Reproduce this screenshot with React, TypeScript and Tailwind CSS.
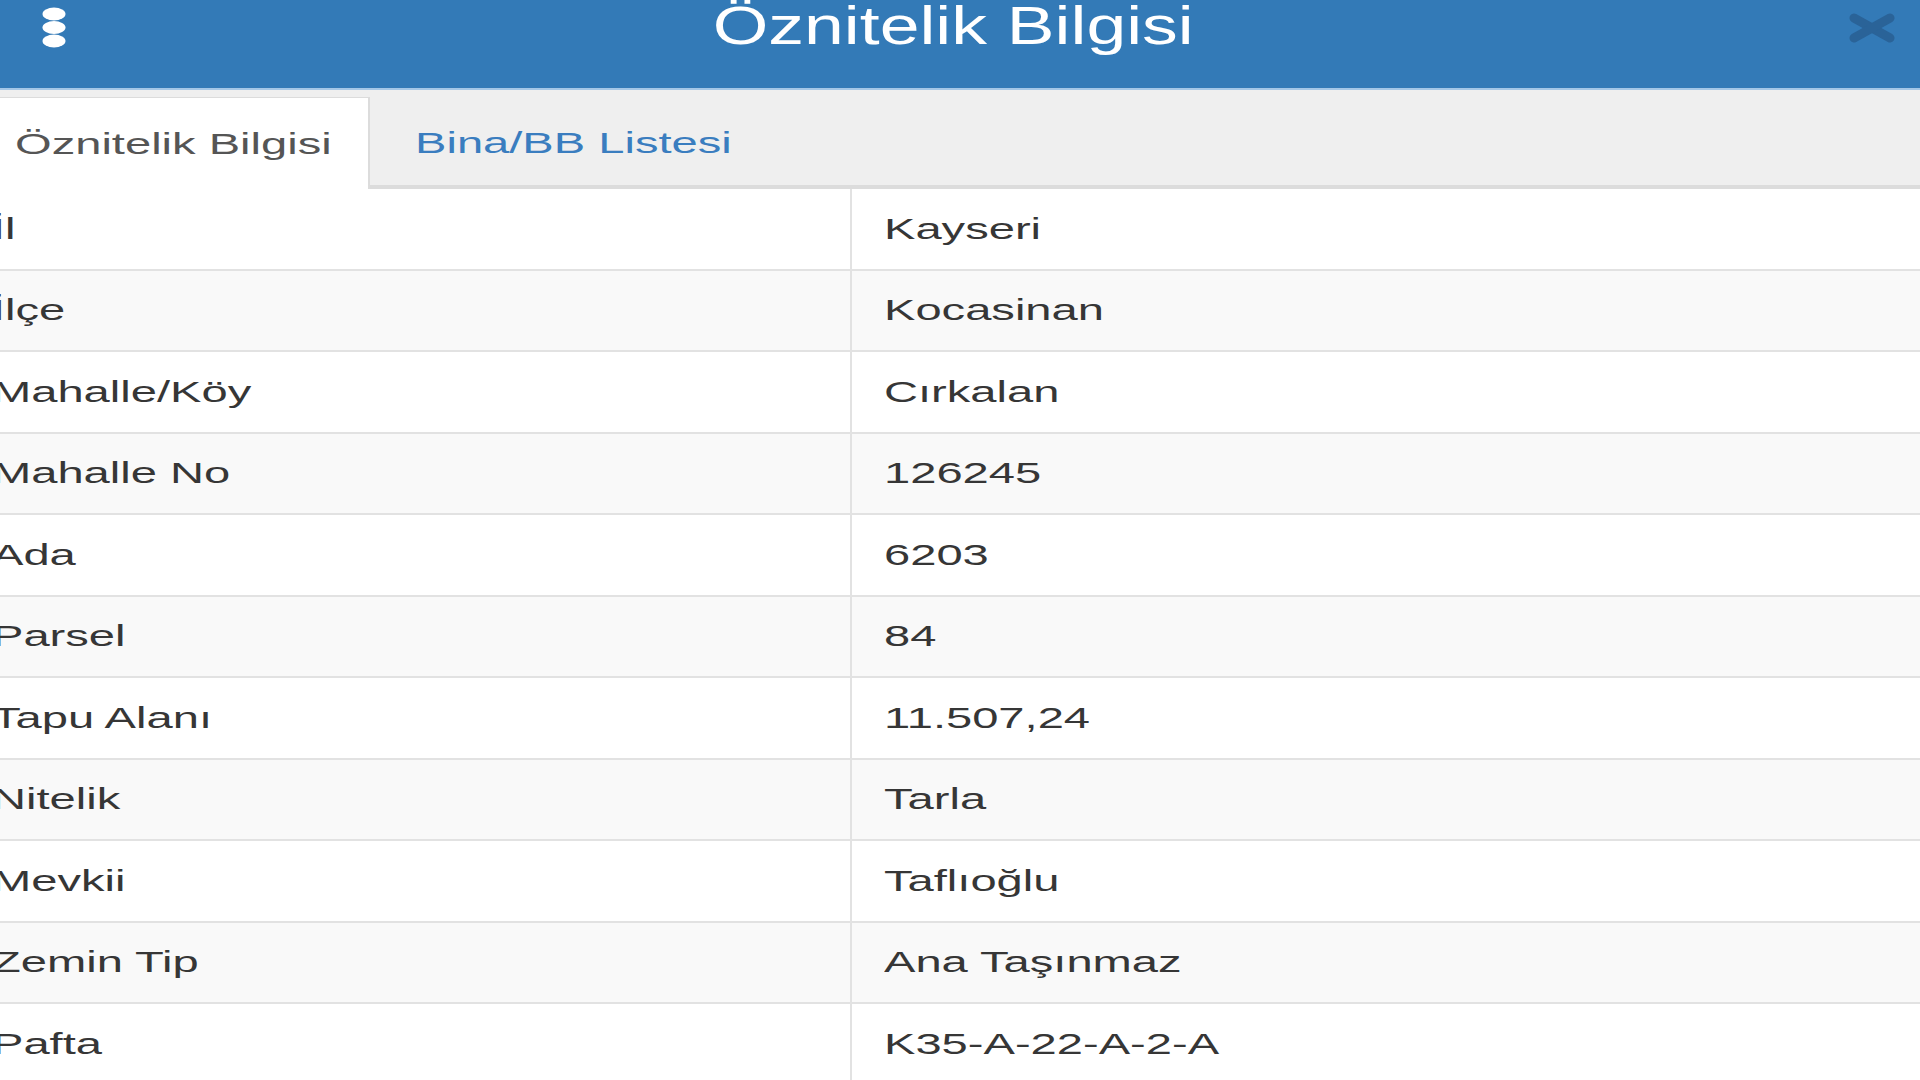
import React from "react";

const rows: [string, string][] = [
  ["İl", "Kayseri"],
  ["İlçe", "Kocasinan"],
  ["Mahalle/Köy", "Cırkalan"],
  ["Mahalle No", "126245"],
  ["Ada", "6203"],
  ["Parsel", "84"],
  ["Tapu Alanı", "11.507,24"],
  ["Nitelik", "Tarla"],
  ["Mevkii", "Taflıoğlu"],
  ["Zemin Tip", "Ana Taşınmaz"],
  ["Pafta", "K35-A-22-A-2-A"],
];

function Wide({ children, className = "" }: { children: React.ReactNode; className?: string }) {
  return (
    <span className={"inline-block origin-left scale-x-[1.57] whitespace-nowrap " + className}>
      {children}
    </span>
  );
}

function KebabIcon() {
  return (
    <svg width="24" height="42" viewBox="0 0 24 42" className="block">
      <ellipse cx="12" cy="7" rx="11.5" ry="6.5" fill="#fff" />
      <ellipse cx="12" cy="20.5" rx="11.5" ry="6.5" fill="#fff" />
      <ellipse cx="12" cy="34" rx="11.5" ry="6.5" fill="#fff" />
    </svg>
  );
}

function CloseIcon() {
  return (
    <svg width="50" height="30" viewBox="0 0 50 30" className="block">
      <g stroke="#2a6398" strokeWidth="9" strokeLinecap="round">
        <line x1="7" y1="5" x2="43" y2="25" />
        <line x1="43" y1="5" x2="7" y2="25" />
      </g>
    </svg>
  );
}

export default function App() {
  return (
    <div
      className="w-[1920px] h-[1080px] overflow-hidden bg-white text-[#363636]"
      style={{ fontFamily: '"Liberation Sans", Arial, sans-serif' }}
    >
      {/* modal header */}
      <div className="h-[88px] bg-[#337ab7] flex items-start">
        <div className="ml-[42px] mt-[7px]">
          <KebabIcon />
        </div>
        <div className="flex-1 flex justify-center pr-[7px] -mt-[1px]">
          <span className="inline-block origin-center scale-x-[1.35] text-[53px] leading-none text-white whitespace-nowrap">
            Öznitelik Bilgisi
          </span>
        </div>
        <div className="mr-[23px] mt-[13px]">
          <CloseIcon />
        </div>
      </div>
      <div className="h-[2px] bg-[#a4c7e7]" />

      {/* tabs */}
      <div className="h-[99px] bg-[#efefef] border-b-4 border-[#dcdcdc] flex items-end">
        <div className="h-[92px] w-[370px] -mb-[4px] bg-white border-t border-r-2 border-[#dcdcdc] flex items-center pl-[15px]">
          <Wide className="text-[30px] leading-none text-[#555]">Öznitelik Bilgisi</Wide>
        </div>
        <div className="h-[92px] flex items-center pl-[45px] -mb-[4px]">
          <Wide className="text-[30px] leading-none text-[#3a7dbf]">Bina/BB Listesi</Wide>
        </div>
      </div>

      {/* attribute table */}
      <div className="-ml-[43px]">
        {rows.map(([label, value], i) => (
          <div
            key={label}
            className={
              "flex h-[81.5px] border-b-2 border-[#e2e2e2] " +
              (i % 2 === 1 ? "bg-[#f9f9f9]" : "bg-white")
            }
          >
            <div className="w-[893px] shrink-0 flex items-center pl-[35px]">
              <Wide className="text-[30px] leading-none">{label}</Wide>
            </div>
            <div className="flex-1 flex items-center pl-[32px] border-l-2 border-[#e2e2e2]">
              <Wide className="text-[30px] leading-none">{value}</Wide>
            </div>
          </div>
        ))}
      </div>
    </div>
  );
}
